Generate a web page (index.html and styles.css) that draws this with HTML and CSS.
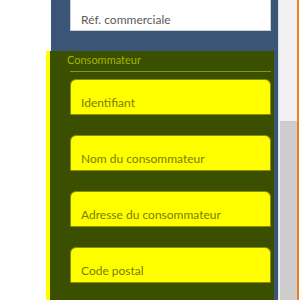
FILE: index.html
```html
<!DOCTYPE html>
<html lang="fr">
<head>
<meta charset="utf-8">
<link rel="stylesheet" href="styles.css">
</head>
<body>
<div class="page">
  <div class="gutter"></div>
  <div class="panel">
    <div class="top-input"><span>Réf. commerciale</span></div>
    <section class="group">
      <div class="legend">Consommateur</div>
      <div class="rule"></div>
      <div class="field">Identifiant</div>
      <div class="field">Nom du consommateur</div>
      <div class="field">Adresse du consommateur</div>
      <div class="field">Code postal</div>
    </section>
  </div>
  <div class="scrollbar"><div class="thumb"></div></div>
  <div class="edge"></div>
</div>
</body>
</html>
```
FILE: styles.css
```css
html, body {
  margin: 0;
  padding: 0;
  background: #ffffff;
  width: 300px;
  height: 300px;
  overflow: hidden;
  font-family: Lato, "Noto Sans", sans-serif;
}
.page {
  display: flex;
  height: 300px;
}
.gutter {
  width: 51px;
  flex: none;
}
.panel {
  width: 227px;
  flex: none;
  background: #3a5576;
  height: 300px;
}
.top-input {
  margin-left: 19px;
  width: 201px;
  height: 31px;
  box-sizing: border-box;
  background: #ffffff;
  border: 1px solid #c9cfd6;
  border-top: none;
  padding: 12px 0 0 10px;
  font-size: 12px;
  line-height: 16px;
  color: #5a5a5a;
}
.group {
  margin: 20px 4px 0 -5px;
  border-left: 4px solid #ffff00;
  background: #3a5000;
  padding: 0 3px 0 16px;
  height: 260px;
}
.legend {
  padding-left: 1px;
  font-size: 11px;
  line-height: 18px;
  color: #a4b400;
}
.rule {
  margin: 2px 0 7px 4px;
  height: 1px;
  background: #8c9a00;
}
.field {
  margin-left: 4px;
  height: 36px;
  box-sizing: border-box;
  background: #ffff00;
  border: 1px solid #8a9000;
  border-radius: 6px 6px 0 0;
  padding: 16px 0 0 10px;
  font-size: 12px;
  line-height: 14px;
  color: #7c7c00;
  margin-bottom: 20px;
}
.scrollbar {
  width: 19px;
  flex: none;
  background: #f0f0f0;
  border-left: 1px solid #dfe3e8;
  box-sizing: border-box;
  padding-top: 121px;
  display: flex;
  justify-content: center;
}
.thumb {
  width: 17px;
  height: 179px;
  background: #cdcdcd;
}
.edge {
  width: 2px;
  flex: none;
  background: #f07d1e;
}
```
